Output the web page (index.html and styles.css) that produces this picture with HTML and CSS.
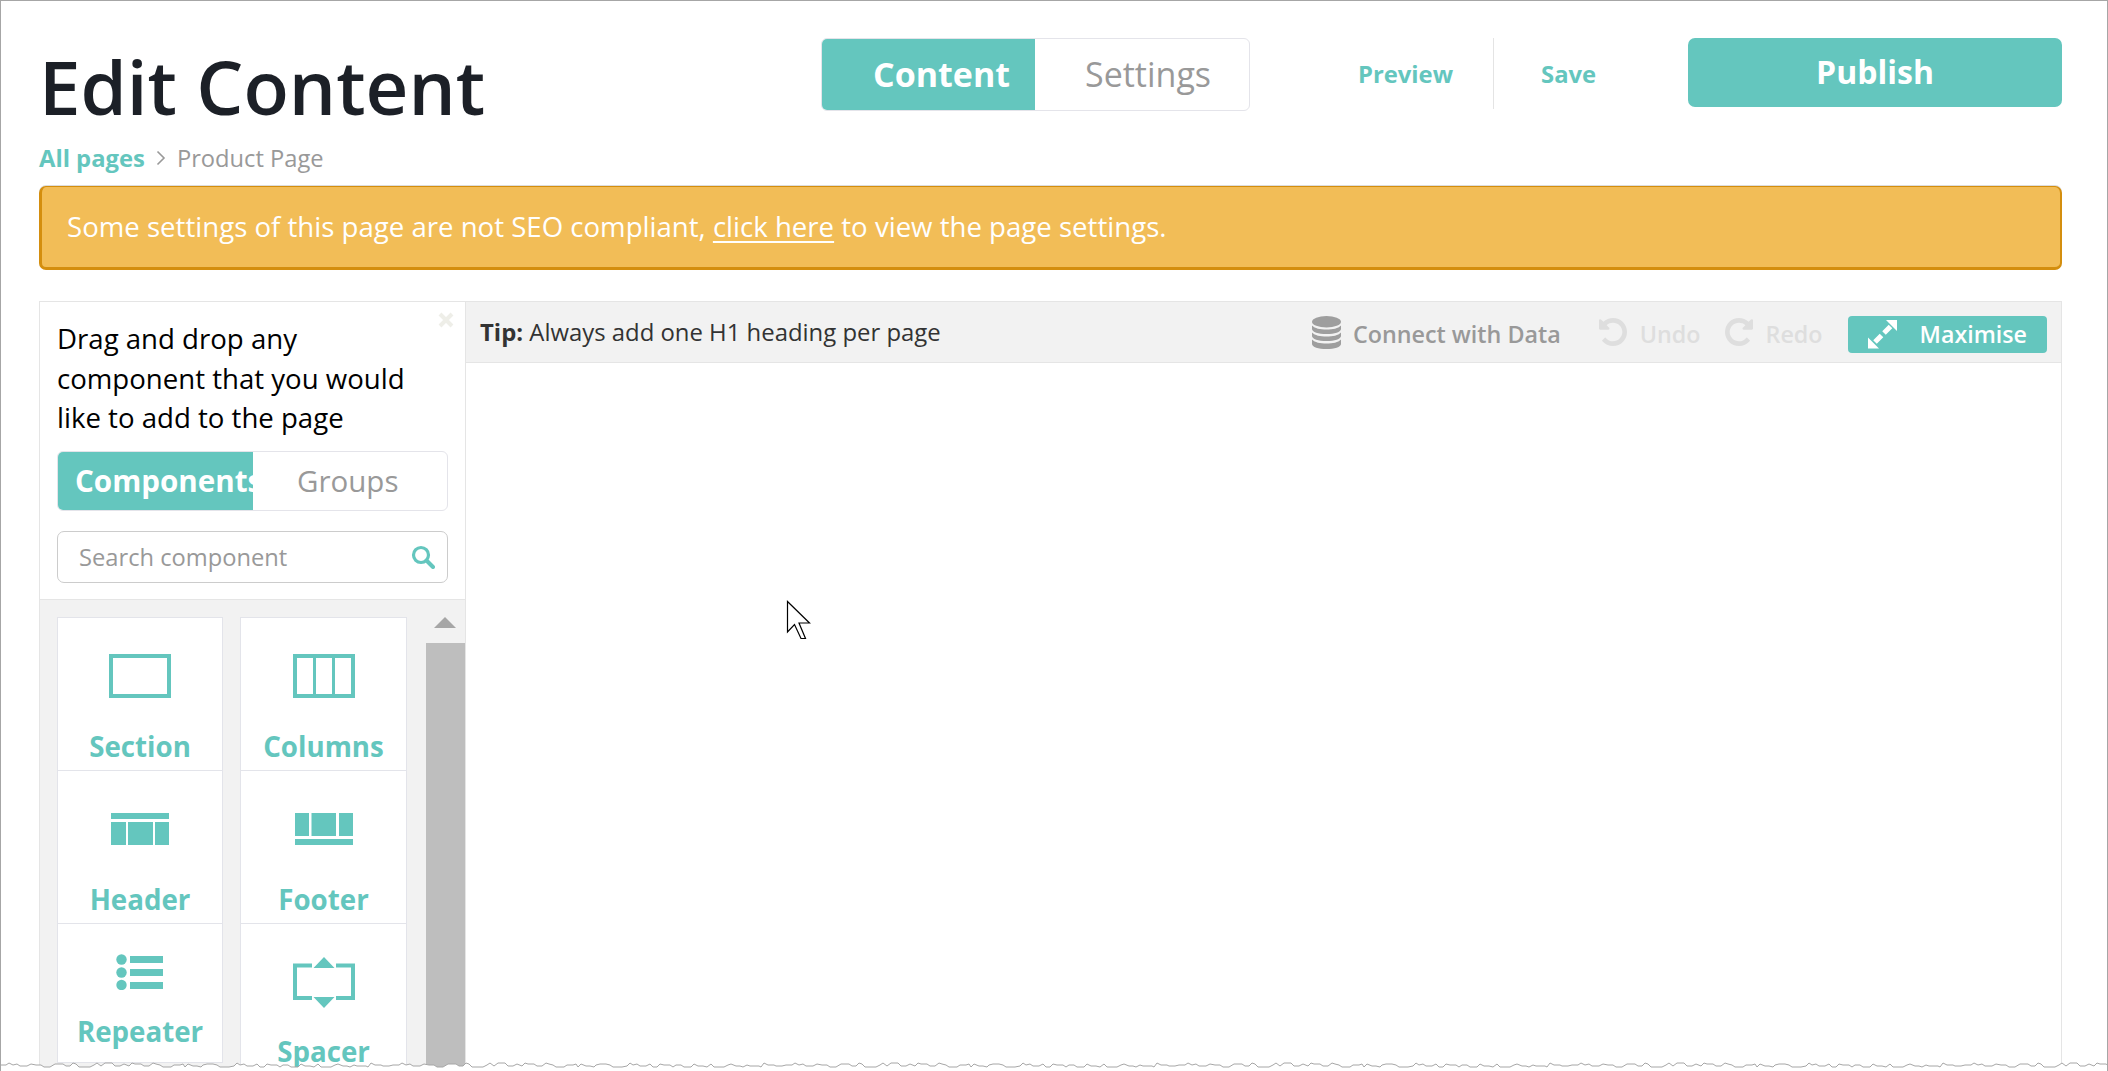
FILE: index.html
```html
<!DOCTYPE html>
<html lang="en">
<head>
<meta charset="utf-8">
<title>Edit Content</title>
<link rel="stylesheet" href="styles.css">
</head>
<body>
<div class="page">
  <header class="top">
    <h1 class="title">Edit Content</h1>
    <div class="tabs main-tabs">
      <span class="tab tab-on main-on">Content</span>
      <span class="tab main-off">Settings</span>
    </div>
    <a class="action preview">Preview</a>
    <span class="sep"></span>
    <a class="action save">Save</a>
    <button class="publish">Publish</button>
  </header>
  <nav class="crumbs">
    <a class="crumb-link">All pages</a>
    <svg class="crumb-chev" width="10" height="16" viewBox="0 0 10 16"><path d="M1.500 1.500 8 8l-6.500 6.500" fill="none" stroke="#999" stroke-width="1.600"/></svg>
    <span class="crumb-cur">Product Page</span>
  </nav>
  <div class="alert">Some settings of this page are not SEO compliant, <a class="alert-link">click here</a> to view the page settings.</div>
  <section class="editor">
    <aside class="side">
      <div class="side-head">
        <svg class="close" width="16" height="16" viewBox="0 0 16 16"><path d="M2 2l12 12M14 2 2 14" stroke="#eeeee8" stroke-width="4"/></svg>
        <p class="intro">Drag and drop any component that you would like to add to the page</p>
        <div class="tabs sub-tabs">
          <span class="tab tab-on sub-on">Components</span>
          <span class="tab sub-off">Groups</span>
        </div>
        <div class="search">
          <span class="search-ph">Search component</span>
          <svg width="24" height="24" viewBox="0 0 24 24"><circle cx="10" cy="10" r="7.500" fill="none" stroke="#64c6be" stroke-width="3.200"/><path d="m15.500 15.500 6.500 6.500" stroke="#64c6be" stroke-width="4" stroke-linecap="round"/></svg>
        </div>
      </div>
      <div class="lib">
        <div class="lib-cols">
          <div class="lib-col">
            <div class="card card-a">
              <svg class="ico" width="62" height="44" viewBox="0 0 62 44"><rect x="2" y="2" width="58" height="40" fill="none" stroke="#64c6be" stroke-width="4"/></svg>
              <span class="label">Section</span>
            </div>
            <div class="card card-b">
              <svg class="ico" width="58" height="32" viewBox="0 0 58 32"><path fill="#64c6be" d="M0 0h58v6H0zM0 9h15v23H0zM17 9h25v23H17zM44 9h14v23H44z"/></svg>
              <span class="label">Header</span>
            </div>
            <div class="card card-c">
              <svg class="ico" width="48" height="36" viewBox="0 0 48 36"><g fill="#64c6be"><circle cx="5.500" cy="5.500" r="5.200"/><circle cx="5.500" cy="18.500" r="5.200"/><circle cx="5.500" cy="31" r="5.200"/><path d="M14 2h33v7H14zM14 15h33v7H14zM14 28h33v7H14z"/></g></svg>
              <span class="label">Repeater</span>
            </div>
          </div>
          <div class="lib-col">
            <div class="card card-a">
              <svg class="ico" width="62" height="44" viewBox="0 0 62 44"><path d="M2 2h58v40H2z" fill="none" stroke="#64c6be" stroke-width="4"/><path d="M21.500 2v40M40.500 2v40" stroke="#64c6be" stroke-width="3"/></svg>
              <span class="label">Columns</span>
            </div>
            <div class="card card-b">
              <svg class="ico" width="58" height="32" viewBox="0 0 58 32"><path fill="#64c6be" d="M0 0h14v23H0zM16.500 0H41v23H16.500zM44 0h14v23H44zM0 26h58v6H0z"/></svg>
              <span class="label">Footer</span>
            </div>
            <div class="card card-d">
              <svg class="ico" width="62" height="51" viewBox="0 0 62 51"><path d="M19 8.500H2V41h17M43 8.500h17V41H43" fill="none" stroke="#64c6be" stroke-width="4"/><path fill="#64c6be" d="M31 0l10.500 11h-21zM31 51 20.500 40h21z"/></svg>
              <span class="label">Spacer</span>
            </div>
          </div>
        </div>
        <div class="scroll">
          <div class="scroll-btn"><span class="scroll-up"></span></div>
          <div class="scroll-thumb"></div>
        </div>
      </div>
    </aside>
    <main class="stage">
      <div class="toolbar">
        <p class="tip"><b>Tip:</b> Always add one H1 heading per page</p>
        <svg class="db" width="29" height="33" viewBox="0 0 29 33"><g fill="#9e9e9e"><ellipse cx="14.500" cy="5.750" rx="14.500" ry="5.750"/><path d="M0 9.500c3 3 8 4 14.500 4s11.500-1 14.500-4V13c0 3-6.500 5-14.500 5S0 16 0 13zM0 16.500c3 3 8 4 14.500 4s11.500-1 14.500-4V20c0 3-6.500 5-14.500 5S0 23 0 20zM0 23.500c3 3 8 4 14.500 4s11.500-1 14.500-4V28c0 3-6.500 5-14.500 5S0 31 0 28z"/></g></svg>
        <span class="connect">Connect with Data</span>
        <svg class="hist" width="28" height="28" viewBox="0 0 1536 1536"><path fill="#dedede" d="M1536 768q0 156-61 298t-164 245-245 164-298 61q-172 0-327-72.500T177 1259q-7-10-6.500-22.500T179 1216l137-138q10-9 25-9 16 2 23 12 73 95 179 147t225 52q104 0 198.500-40.500T1130 1130t109.500-163.500T1280 768t-40.500-198.500T1130 406 966.500 296.500 768 256q-98 0-188 35.500T420 393l137 138q31 30 14 69-17 40-59 40H64q-26 0-45-19T0 576V128q0-42 40-59 39-17 69 14l130 129Q346 111 483.500 55.500T768 0q156 0 298 61t245 164 164 245 61 298z"/></svg>
        <span class="hist-text undo">Undo</span>
        <svg class="hist redo-ico" width="28" height="28" viewBox="0 0 1536 1536"><path fill="#dedede" transform="matrix(-1 0 0 1 1536 0)" d="M1536 768q0 156-61 298t-164 245-245 164-298 61q-172 0-327-72.500T177 1259q-7-10-6.500-22.500T179 1216l137-138q10-9 25-9 16 2 23 12 73 95 179 147t225 52q104 0 198.500-40.500T1130 1130t109.500-163.500T1280 768t-40.500-198.500T1130 406 966.500 296.500 768 256q-98 0-188 35.500T420 393l137 138q31 30 14 69-17 40-59 40H64q-26 0-45-19T0 576V128q0-42 40-59 39-17 69 14l130 129Q346 111 483.500 55.500T768 0q156 0 298 61t245 164 164 245 61 298z"/></svg>
        <span class="hist-text redo">Redo</span>
        <button class="maxi">
          <svg width="29" height="29" viewBox="0 0 29 29"><path fill="#fff" d="M29 0v11L18 0zM0 28.500v-11l11 11z"/><path d="M22.500 6.500l-6.500 6.500M13.500 15.500 7 22" stroke="#fff" stroke-width="5"/></svg>
          <span>Maximise</span>
        </button>
      </div>
    </main>
  </section>
  <svg class="cursor" width="26" height="40" viewBox="0 0 26 40"><path d="M1.500 1.500V32l7-7.500 6.500 14h4.500L13 23h10.500z" fill="#fff" stroke="#000" stroke-width="1.200"/></svg>
  <svg class="torn" width="2108" height="13" viewBox="0 0 2108 13">
    <defs>
      <pattern id="tear" width="393" height="13" patternUnits="userSpaceOnUse">
        <path fill="#fff" d="M0 5L6 5 9 3 13 5 17 4 20 6 27 6 31 4 36 5 41 5 44 7 50 7 55 4 63 4 66 6 70 6 73 3 76 4 79 7 90 7 94 5 97 3 101 6 105 3 112 3 115 6 120 6 124 4 129 6 132 3 135 4 141 4 144 6 149 6 153 3 156 4 160 5 163 7 171 7 174 5 180 5 183 4 185 7 188 4 193 6 197 6 201 7 203 5 207 4 213 4 217 5 220 7 229 7 234 6 237 3 240 5 244 4 247 6 253 6 257 4 260 7 264 7 267 4 271 5 277 5 280 7 283 5 288 5 291 7 298 7 301 4 305 6 310 6 314 7 318 4 321 7 331 7 335 5 338 4 343 6 347 6 350 7 354 5 357 6 366 6 368 7 371 3 375 5 381 5 383 6 389 6 393 5V13H0z"/>
        <path fill="none" stroke="#a6a6a6" stroke-width="1" d="M0 5L6 5 9 3 13 5 17 4 20 6 27 6 31 4 36 5 41 5 44 7 50 7 55 4 63 4 66 6 70 6 73 3 76 4 79 7 90 7 94 5 97 3 101 6 105 3 112 3 115 6 120 6 124 4 129 6 132 3 135 4 141 4 144 6 149 6 153 3 156 4 160 5 163 7 171 7 174 5 180 5 183 4 185 7 188 4 193 6 197 6 201 7 203 5 207 4 213 4 217 5 220 7 229 7 234 6 237 3 240 5 244 4 247 6 253 6 257 4 260 7 264 7 267 4 271 5 277 5 280 7 283 5 288 5 291 7 298 7 301 4 305 6 310 6 314 7 318 4 321 7 331 7 335 5 338 4 343 6 347 6 350 7 354 5 357 6 366 6 368 7 371 3 375 5 381 5 383 6 389 6 393 5"/>
      </pattern>
    </defs>
    <rect x="0" y="0" width="2108" height="13" fill="url(#tear)"/>
  </svg>
</div>
</body>
</html>
```

FILE: styles.css
```css
* { box-sizing: border-box; }
html, body { margin: 0; padding: 0; background: #fff; }
body { font-family: "Open Sans", "Liberation Sans", sans-serif; }
a { cursor: pointer; }
.page {
  position: relative;
  width: 2108px;
  height: 1071px;
  overflow: hidden;
  border: 1px solid #a6a6a6;
  border-bottom: 0;
  padding: 0 45px 0 38px;
}
.top { display: flex; align-items: flex-start; height: 137px; padding-top: 37px; }
.title { margin: -2px 0 0; width: 782px; flex: none; font-size: 74.400px; line-height: 100px; font-weight: 600; color: #1c2027; white-space: nowrap; }
.tabs { display: flex; overflow: hidden; border: 1px solid #e4e4ea; border-radius: 6px; background: #fff; }
.tab { display: block; white-space: nowrap; overflow: hidden; }
.tab-on { background: #64c6be; color: #fff; font-weight: 700; }
.main-tabs { width: 429px; height: 73px; flex: none; }
.main-on { width: 213px; padding-left: 51px; font-size: 34px; line-height: 71px; }
.main-off { flex: 1; padding-left: 50px; font-size: 34px; line-height: 71px; color: #999; }
.action { font-size: 23.800px; line-height: 32px; font-weight: 700; color: #64c6be; margin-top: 20px; }
.preview { margin-left: 108px; }
.sep { width: 1px; height: 71px; background: #e4e4e4; margin-left: 40px; }
.save { margin-left: 47px; }
.publish { position: absolute; left: 1687px; top: 37px; width: 374px; height: 69px; border: 0; border-radius: 7px; background: #64c6be; color: #fff; font: 700 32px/66px "Open Sans", sans-serif; padding: 0 0 2px; }
.crumbs { display: flex; align-items: center; height: 33px; margin-top: 3px; font-size: 23.800px; line-height: 32px; }
.crumb-link { font-weight: 700; color: #64c6be; }
.crumb-chev { margin: 0 11px 0 11px; }
.crumb-cur { color: #999; font-size: 23.700px; }
.alert { height: 84px; margin-top: 12px; border: solid #d48e0e; border-width: 1px 2px 3px 3px; border-radius: 7px; background: #f2bd57; box-shadow: 0 -1px 0 #ddd; color: #fff; font-size: 27.600px; line-height: 78px; padding-left: 25px; }
.alert-link { text-decoration: underline; text-underline-offset: 4px; }
.editor { display: flex; height: 800px; margin-top: 31px; border: 1px solid #e5e5e5; border-bottom: 0; }
.side { position: relative; width: 426px; flex: none; border-right: 1px solid #e5e5e5; }
.side-head { height: 297px; padding: 17px 17px 0 17px; }
.close { position: absolute; right: 11px; top: 10px; }
.intro { margin: 0; width: 370px; font-size: 27.600px; line-height: 39.500px; color: #000; }
.sub-tabs { width: 391px; height: 60px; margin-top: 13px; }
.sub-on { width: 195px; padding-left: 17px; font-size: 29.600px; line-height: 58px; }
.sub-off { flex: 1; padding-left: 44px; font-size: 29.500px; line-height: 58px; color: #999; }
.search { display: flex; align-items: center; justify-content: space-between; height: 52px; margin-top: 20px; padding: 0 12px 0 21px; border: 1px solid #ccc; border-radius: 7px; }
.search-ph { font-size: 23.700px; line-height: 32px; color: #999; }
.lib { display: flex; height: 500px; background: #f2f2f2; border-top: 1px solid #e5e5e5; padding: 0 0 0 17px; }
.lib-cols { flex: 1; display: flex; gap: 17px; padding-top: 17px; }
.lib-col { width: 166px; }
.lib-col + .lib-col { width: 167px; }
.card { display: flex; flex-direction: column; align-items: center; height: 153px; background: #fff; border: 1px solid #e3e4ea; border-bottom: 0; }
.card-a { padding-top: 36px; }
.card-b { padding-top: 42px; }
.card-c { height: 140px; padding-top: 30px; border-bottom: 1px solid #e3e4ea; }
.card-d { height: 200px; padding-top: 33px; }
.ico { display: block; flex: none; }
.label { font-size: 27.700px; line-height: 36px; font-weight: 700; color: #64c6be; white-space: nowrap; }
.card-a .label { margin-top: 30px; }
.card-b .label { margin-top: 36px; }
.card-c .label { margin-top: 23px; }
.card-d .label { margin-top: 25px; }
.scroll { width: 39px; flex: none; display: flex; flex-direction: column; }
.scroll-btn { height: 43px; padding: 17px 0 0 8px; }
.scroll-up { display: block; width: 0; height: 0; border: solid transparent; border-width: 0 11px 11px; border-bottom-color: #a6a6a6; }
.scroll-thumb { flex: 1; background: #bebebe; }
.stage { flex: 1; min-width: 0; }
.toolbar { display: flex; align-items: center; height: 61px; background: #f2f2f2; border-bottom: 1px solid #e5e5e5; padding-left: 14px; }
.tip { margin: -1px 0 0; width: 831px; flex: none; font-size: 23.900px; line-height: 32px; color: #333; white-space: nowrap; }
.tip b { font-weight: 700; }
.db { flex: none; margin-left: 1px; }
.connect { margin: 4px 0 0 12px; font-size: 23.300px; font-weight: 600; color: #999; white-space: nowrap; }
.hist { flex: none; margin-left: 38px; }
.redo-ico { margin-left: 24px; }
.hist-text { margin: 4px 0 0 13px; font-size: 23.300px; font-weight: 600; color: #dedede; }
.maxi { display: flex; align-items: center; width: 199px; height: 37px; margin: 4px 0 0 25px; padding: 0 0 0 20px; border: 0; border-radius: 4px; background: #64c6be; color: #fff; font: 600 23.200px/37px "Open Sans", sans-serif; }
.maxi span { margin-left: 23px; }
.cursor { position: absolute; left: 785px; top: 599px; }
.torn { position: absolute; left: -1px; top: 1059px; }
```
